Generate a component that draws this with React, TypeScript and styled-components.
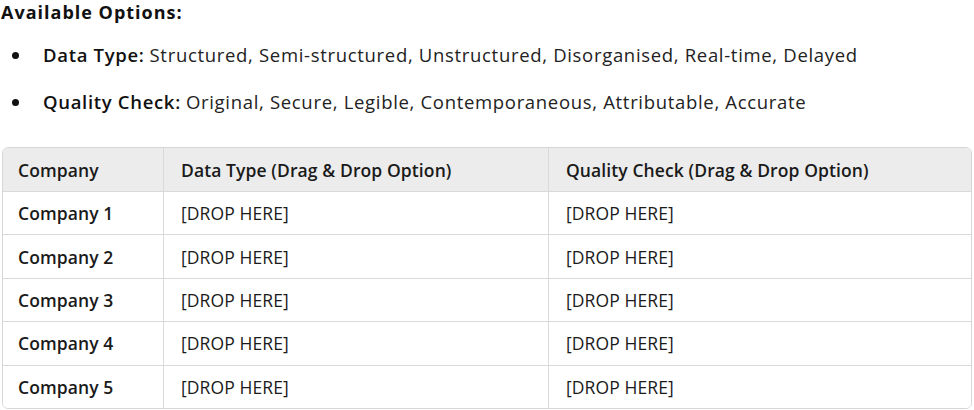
import React from "react";
import styled, { createGlobalStyle } from "styled-components";

const Global = createGlobalStyle`
  html, body { margin: 0; padding: 0; background: #ffffff; }
  body { font-family: "Open Sans", "Noto Sans", sans-serif; color: #1f1f1f; }
`;

const Page = styled.div`
  width: 974px;
  height: 410px;
  overflow: hidden;
  display: flex;
  flex-direction: column;
`;

const Heading = styled.div`
  font-weight: 700;
  font-size: 18px;
  line-height: 24px;
  letter-spacing: 1px;
  padding-left: 1px;
  color: #111;
`;

const List = styled.ul`
  list-style: none;
  margin: 19px 0 0 0;
  padding: 0;
  display: flex;
  flex-direction: column;
  gap: 23px;
`;

const Item = styled.li`
  display: flex;
  align-items: center;
  font-size: 18.5px;
  line-height: 24px;
  letter-spacing: 0.68px;
  color: #222;
`;

const Bullet = styled.span`
  width: 7px;
  height: 7px;
  border-radius: 50%;
  background: #111;
  margin-left: 12px;
  margin-right: 24px;
  flex: none;
`;

const Label = styled.b`
  font-weight: 600;
  color: #111;
  margin-right: 5px;
`;

const TableWrap = styled.div`
  margin: 33px 2px 0 2px;
  border: 1px solid #d6d6d6;
  border-radius: 6px;
  overflow: hidden;
`;

const Grid = styled.div`
  display: grid;
  grid-template-columns: 160px 385px 1fr;
`;

const Cell = styled.div<{ $head?: boolean; $first?: boolean; $top?: boolean }>`
  height: ${(p) => (p.$top ? "43px" : "42.4px")};
  display: flex;
  align-items: center;
  padding-left: ${(p) => (p.$first ? "15px" : "17px")};
  font-size: 17.5px;
  letter-spacing: 0.1px;
  font-weight: ${(p) => (p.$head || p.$first ? 600 : 400)};
  color: #1a1a1a;
  background: ${(p) => (p.$head ? "#ececec" : "#ffffff")};
  border-left: ${(p) => (p.$first ? "none" : "1px solid #d9d9d9")};
  border-top: ${(p) => (p.$top ? "none" : "1px solid #d9d9d9")};
`;

const rows = ["Company 1", "Company 2", "Company 3", "Company 4", "Company 5"];

export default function App() {
  return (
    <Page>
      <Global />
      <Heading>Available Options:</Heading>
      <List>
        <Item>
          <Bullet />
          <span>
            <Label>Data Type:</Label>Structured, Semi-structured, Unstructured, Disorganised, Real-time, Delayed
          </span>
        </Item>
        <Item>
          <Bullet />
          <span>
            <Label>Quality Check:</Label>Original, Secure, Legible, Contemporaneous, Attributable, Accurate
          </span>
        </Item>
      </List>
      <TableWrap>
        <Grid>
          <Cell $head $first $top>Company</Cell>
          <Cell $head $top>Data Type (Drag &amp; Drop Option)</Cell>
          <Cell $head $top>Quality Check (Drag &amp; Drop Option)</Cell>
          {rows.map((r) => (
            <React.Fragment key={r}>
              <Cell $first>{r}</Cell>
              <Cell>[DROP HERE]</Cell>
              <Cell>[DROP HERE]</Cell>
            </React.Fragment>
          ))}
        </Grid>
      </TableWrap>
    </Page>
  );
}
